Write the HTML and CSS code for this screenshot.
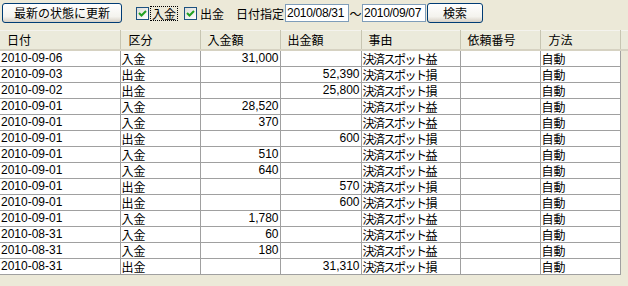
FILE: index.html
```html
<!DOCTYPE html>
<html lang="ja">
<head>
  <meta charset="UTF-8">
  <title>入出金履歴</title>
  <link rel="stylesheet" href="styles.css">
</head>
<body>

  <!-- ツールバー -->
  <div class="toolbar">
    <button class="btn btn-refresh">最新の状態に更新</button>
    <label class="check focus"><span class="box"><svg width="9" height="9" viewBox="0 0 9 9"><path d="M1 4 L3.5 6.5 L8 2" fill="none" stroke="#21a121" stroke-width="2"/></svg></span><span class="lbl">入金</span></label>
    <label class="check"><span class="box"><svg width="9" height="9" viewBox="0 0 9 9"><path d="M1 4 L3.5 6.5 L8 2" fill="none" stroke="#21a121" stroke-width="2"/></svg></span><span class="lbl">出金</span></label>
    <span class="date-label">日付指定</span>
    <input class="date" type="text" value="2010/08/31">
    <span class="tilde">～</span>
    <input class="date" type="text" value="2010/09/07">
    <button class="btn btn-search">検索</button>
  </div>

  <!-- 一覧 -->
  <div class="list">
    <table>
      <colgroup>
        <col class="w-date">
        <col class="w-kind">
        <col class="w-amt">
        <col class="w-amt2">
        <col class="w-reason">
        <col class="w-no">
        <col class="w-way">
        <col>
      </colgroup>
      <thead>
        <tr>
          <th>日付</th>
          <th class="pad8">区分</th>
          <th>入金額</th>
          <th>出金額</th>
          <th>事由</th>
          <th>依頼番号</th>
          <th class="pad8">方法</th>
          <th class="rest"></th>
        </tr>
      </thead>
      <tbody id="rows"></tbody>
    </table>
  </div>

  <script>
    (function() {
      var data = [
        ['2010-09-06', '入金', '31,000', '', '決済スポット益'],
        ['2010-09-03', '出金', '', '52,390', '決済スポット損'],
        ['2010-09-02', '出金', '', '25,800', '決済スポット損'],
        ['2010-09-01', '入金', '28,520', '', '決済スポット益'],
        ['2010-09-01', '入金', '370', '', '決済スポット益'],
        ['2010-09-01', '出金', '', '600', '決済スポット損'],
        ['2010-09-01', '入金', '510', '', '決済スポット益'],
        ['2010-09-01', '入金', '640', '', '決済スポット益'],
        ['2010-09-01', '出金', '', '570', '決済スポット損'],
        ['2010-09-01', '出金', '', '600', '決済スポット損'],
        ['2010-09-01', '入金', '1,780', '', '決済スポット益'],
        ['2010-08-31', '入金', '60', '', '決済スポット益'],
        ['2010-08-31', '入金', '180', '', '決済スポット益'],
        ['2010-08-31', '出金', '', '31,310', '決済スポット損']
      ];

      var tbody = document.getElementById('rows');
      data.forEach(function(r) {
        var tr = document.createElement('tr');
        tr.innerHTML =
          '<td class="num">' + r[0] + '</td>' +
          '<td>' + r[1] + '</td>' +
          '<td class="num right">' + r[2] + '</td>' +
          '<td class="num right">' + r[3] + '</td>' +
          '<td class="kana">' + r[4] + '</td>' +
          '<td></td>' +
          '<td>自動</td>';
        tbody.appendChild(tr);
      });
    })();
  </script>

</body>
</html>
```

FILE: styles.css
```css
body {
  margin: 0;
  background: #ece9d8;
  font-family: "Noto Sans CJK JP", sans-serif;
  font-size: 12px;
  color: #000;
}

/* ツールバー */
.toolbar {
  display: flex;
  align-items: center;
  height: 26px;
  padding: 0 0 0 2px;
}

.btn {
  font-family: inherit;
  font-size: 12px;
  height: 20px;
  padding: 0;
  border: 1px solid #003c74;
  border-radius: 3px;
  background: linear-gradient(#ffffff, #f4f3ee 70%, #d6d0c5);
  color: #000;
  line-height: 16px;
}

.btn-refresh {
  width: 120px;
  margin-right: 14px;
}

.btn-search {
  width: 56px;
  margin-left: 1px;
}

.check {
  display: flex;
  align-items: center;
  margin-right: 7px;
}

.check .box {
  width: 11px;
  height: 11px;
  border: 1px solid #1c5180;
  background: linear-gradient(135deg, #dcdcd7, #ffffff);
  display: flex;
  align-items: center;
  justify-content: center;
  margin-right: 2px;
}

.check .lbl {
  padding: 0 1px;
  line-height: 13px;
}

.check.focus .lbl {
  outline: 1px dotted #000;
}

.date-label {
  margin-left: 4px;
  margin-right: 1px;
}

.date {
  width: 64px;
  height: 18px;
  padding: 0 1px;
  border: 1px solid #7f9db9;
  font-family: "Liberation Sans", sans-serif;
  font-size: 12px;
  letter-spacing: -0.3px;
  color: #000;
  background: #fff;
  box-sizing: border-box;
}

.date + .tilde {
  width: 13px;
  text-align: center;
}

/* 一覧 */
.list {
  margin-top: 4px;
}

table {
  border-collapse: collapse;
  table-layout: fixed;
  width: 628px;
}

col.w-date { width: 120px; }
col.w-kind { width: 80px; }
col.w-amt { width: 80px; }
col.w-amt2 { width: 81px; }
col.w-reason { width: 99px; }
col.w-no { width: 80px; }
col.w-way { width: 80px; }

th {
  height: 18px;
  padding: 0 0 0 7px;
  text-align: left;
  font-weight: normal;
  background: #ebeadb;
  border-top: 1px solid #f4f3ee;
  border-bottom: 2px solid #d6d2c2;
  border-right: 1px solid #c7c5b2;
  line-height: 16px;
  white-space: nowrap;
}

th.pad8 { padding-left: 8px; }
th.rest { border-right: none; }

td {
  height: 15px;
  padding: 0 1px;
  background: #fff;
  border: 1px solid #a0a0a0;
  border-top: none;
  line-height: 15px;
  white-space: nowrap;
  overflow: hidden;
}

td:first-child {
  border-left: none;
}

td.num {
  font-family: "Liberation Sans", sans-serif;
  font-size: 12px;
}

td.right {
  text-align: right;
}

td.kana {
  letter-spacing: -1.5px;
}
```
